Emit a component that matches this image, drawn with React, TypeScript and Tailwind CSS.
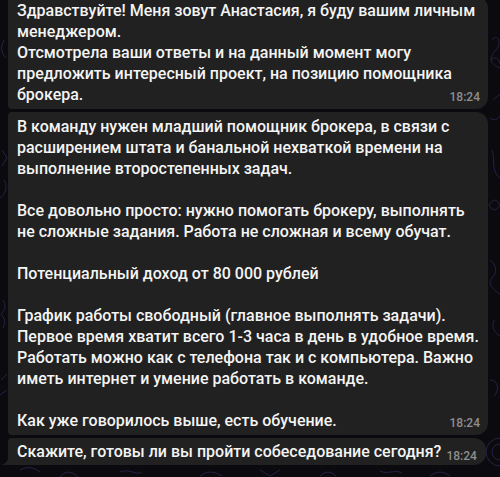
import React from "react";

const TIME = "18:24";

function Time() {
  return (
    <span className="shrink-0 text-[12px] leading-[14px] text-[#8e8e8e] pb-[1px]">{TIME}</span>
  );
}

function Lines({ lines }: { lines: string[] }) {
  return (
    <>
      {lines.map((l, i) => (
        <div key={i} className="h-[21px] whitespace-nowrap">
          {l === "" ? "\u00a0" : l}
        </div>
      ))}
    </>
  );
}

export default function App() {
  const b1 = [
    "Здравствуйте! Меня зовут Анастасия, я буду вашим личным",
    "менеджером.",
    "Отсмотрела ваши ответы и на данный момент могу",
    "предложить интересный проект, на позицию помощника",
  ];
  const b2 = [
    "В команду нужен младший помощник брокера, в связи с",
    "расширением штата и банальной нехваткой времени на",
    "выполнение второстепенных задач.",
    "",
    "Все довольно просто: нужно помогать брокеру, выполнять",
    "не сложные задания. Работа не сложная и всему обучат.",
    "",
    "Потенциальный доход от 80 000 рублей",
    "",
    "График работы свободный (главное выполнять задачи).",
    "Первое время хватит всего 1-3 часа в день в удобное время.",
    "Работать можно как с телефона так и с компьютера. Важно",
    "иметь интернет и умение работать в команде.",
    "",
  ];
  return (
    <div className="relative w-[500px] h-[477px] overflow-hidden bg-[#0b0a0e] font-['Roboto',sans-serif] font-medium text-[16px] leading-[21px] text-[#f4f4f4]">
      <svg className="absolute inset-0" width="500" height="477" viewBox="0 0 500 477" fill="none" stroke="#2a2044" strokeWidth="1">
        <path d="M492 40 c6 -8 10 4 4 10 s-8 14 4 18" />
        <path d="M490 60 q8 -6 10 4" />
        <path d="M493 100 l7 -6 M490 118 q6 4 10 -2" />
        <path d="M492 150 c4 10 -2 20 8 28" />
        <path d="M489 205 q6 -10 11 0 q-6 10 -11 0" />
        <path d="M490 260 c6 4 8 12 2 18 s4 14 8 16" />
        <path d="M494 320 q-4 10 6 16" />
        <path d="M490 380 c8 0 10 10 4 16" />
        <circle cx="500" cy="452" r="8" />
        <circle cx="500" cy="452" r="14" />
        <path d="M4 40 q-6 10 2 18" />
        <path d="M2 150 l5 8 l-5 8" />
        <path d="M4 180 c4 6 2 14 -4 18" />
        <path d="M3 300 q5 8 -2 14 q6 6 2 14" />
        <path d="M1 380 l6 -6 M0 395 l7 -5" />
        <path d="M20 470 q10 -6 20 2 M60 477 q8 -10 18 0 M120 472 c10 -4 16 4 22 0 M200 476 q10 -8 22 0 M260 470 l10 6 l10 -6 M320 476 q8 -8 16 0 M380 471 c8 4 14 -2 22 2 M430 476 q10 -8 20 0" />
      </svg>

      <div className="relative flex flex-col items-start pl-[8px] gap-[3px]">
        <div className="-mt-[4px] w-[480px] bg-[#212121] rounded-tr-[12px] rounded-br-[12px] rounded-tl-[4px] rounded-bl-[4px] pl-[9px] pr-[8px] pt-[4px] pb-[4px]">
          <Lines lines={b1} />
          <div className="h-[21px] flex items-end justify-between">
            <span className="self-start whitespace-nowrap">брокера.</span>
            <Time />
          </div>
        </div>

        <div className="w-[480px] bg-[#212121] rounded-[12px] rounded-tl-[4px] rounded-bl-[4px] pl-[9px] pr-[8px] pt-[4px] pb-[4px]">
          <Lines lines={b2} />
          <div className="h-[21px] flex items-end justify-between">
            <span className="self-start whitespace-nowrap">Как уже говорилось выше, есть обучение.</span>
            <Time />
          </div>
        </div>

        <div className="relative bg-[#212121] rounded-tr-[12px] rounded-br-[12px] rounded-tl-[4px] rounded-bl-none pl-[9px] pr-[9px] pt-[3px] pb-[3px]">
          <svg className="absolute left-[-6px] bottom-0" width="7" height="12" viewBox="0 0 7 12">
            <path d="M7 0 Q7 9 0 12 H7 Z" fill="#212121" />
          </svg>
          <div className="h-[21px] flex items-end gap-[5px]">
            <span className="self-start whitespace-nowrap">Скажите, готовы ли вы пройти собеседование сегодня?</span>
            <span className="shrink-0 text-[12px] leading-[14px] text-[#8e8e8e] translate-y-[1px]">{TIME}</span>
          </div>
        </div>
      </div>
    </div>
  );
}
